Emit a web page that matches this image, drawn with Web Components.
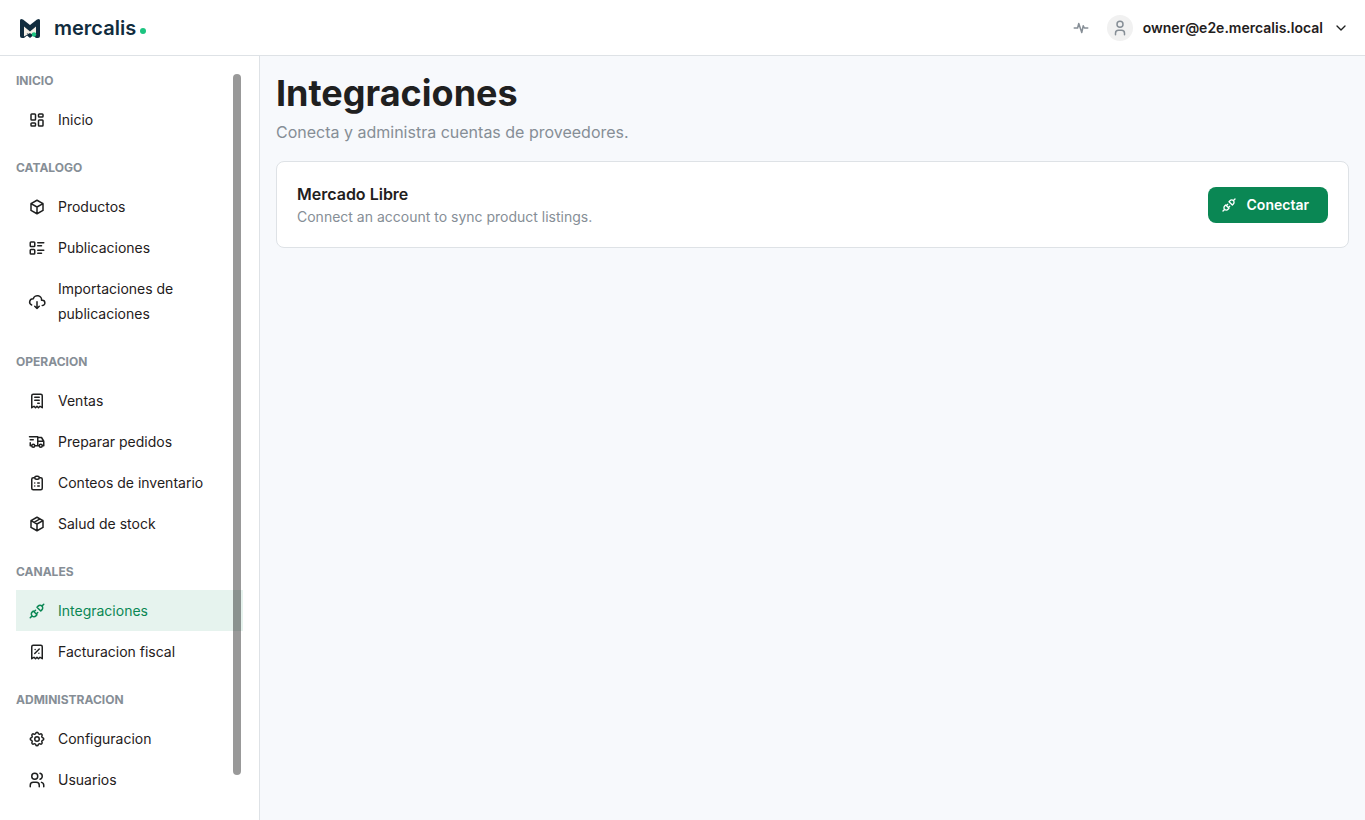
<!DOCTYPE html>
<html lang="es">
<head>
<meta charset="utf-8">
<title>Mercalis - Integraciones</title>
<style>
  :root {
    --color-text: #1f2020;
    --color-dimmed: #868e96;
    --color-border: #dee2e6;
    --color-canvas: #f7f9fc;
    --color-brand: #0a8754;
    --color-brand-soft: #e6f3ee;
    --color-ink: #112c3e;
  }
  body {
    margin: 0;
    font-family: Inter, "Liberation Sans", sans-serif;
    font-size: 14px;
    color: var(--color-text);
  }
</style>
</head>
<body>
<app-shell>
  <app-brand slot="brand"></app-brand>
  <user-menu slot="user" email="owner@e2e.mercalis.local"></user-menu>

  <side-nav slot="nav">
    <nav-group label="Inicio">
      <nav-item icon="dashboard">Inicio</nav-item>
    </nav-group>
    <nav-group label="Catalogo">
      <nav-item icon="box">Productos</nav-item>
      <nav-item icon="list">Publicaciones</nav-item>
      <nav-item icon="cloud">Importaciones de publicaciones</nav-item>
    </nav-group>
    <nav-group label="Operacion">
      <nav-item icon="receipt">Ventas</nav-item>
      <nav-item icon="truck">Preparar pedidos</nav-item>
      <nav-item icon="clipboard">Conteos de inventario</nav-item>
      <nav-item icon="package">Salud de stock</nav-item>
    </nav-group>
    <nav-group label="Canales">
      <nav-item icon="plug" active>Integraciones</nav-item>
      <nav-item icon="tax">Facturacion fiscal</nav-item>
    </nav-group>
    <nav-group label="Administracion">
      <nav-item icon="settings">Configuracion</nav-item>
      <nav-item icon="users">Usuarios</nav-item>
    </nav-group>
  </side-nav>

  <page-heading>
    Integraciones
    <span slot="description">Conecta y administra cuentas de proveedores.</span>
  </page-heading>
  <provider-card>
    <span slot="name">Mercado Libre</span>
    <span slot="description">Connect an account to sync product listings.</span>
    <app-button slot="action" icon="plug">Conectar</app-button>
  </provider-card>
</app-shell>

<script>
const BOX = 'M12 3l8 4.5v9l-8 4.5l-8 -4.5v-9l8 -4.5M12 12l8 -4.5M12 12v9M12 12l-8 -4.5';
const RECEIPT = 'M5 21v-16a2 2 0 0 1 2 -2h10a2 2 0 0 1 2 2v16l-3 -2l-2 2l-2 -2l-2 2l-2 -2l-3 2';

// Stroke icons on a 24x24 grid
const ICONS = {
  dashboard: 'M5 4h4a1 1 0 0 1 1 1v6a1 1 0 0 1 -1 1h-4a1 1 0 0 1 -1 -1v-6a1 1 0 0 1 1 -1M5 16h4a1 1 0 0 1 1 1v2a1 1 0 0 1 -1 1h-4a1 1 0 0 1 -1 -1v-2a1 1 0 0 1 1 -1M15 12h4a1 1 0 0 1 1 1v6a1 1 0 0 1 -1 1h-4a1 1 0 0 1 -1 -1v-6a1 1 0 0 1 1 -1M15 4h4a1 1 0 0 1 1 1v2a1 1 0 0 1 -1 1h-4a1 1 0 0 1 -1 -1v-2a1 1 0 0 1 1 -1',
  box: BOX,
  package: BOX + 'M16 5.25l-8 4.5',
  list: 'M13 5h8M13 9h5M13 15h8M13 19h5M3 5a1 1 0 0 1 1 -1h4a1 1 0 0 1 1 1v4a1 1 0 0 1 -1 1h-4a1 1 0 0 1 -1 -1zM3 15a1 1 0 0 1 1 -1h4a1 1 0 0 1 1 1v4a1 1 0 0 1 -1 1h-4a1 1 0 0 1 -1 -1z',
  cloud: 'M19 18a3.5 3.5 0 0 0 0 -7h-1a5 4.5 0 0 0 -11 -2a4.6 4.4 0 0 0 -2.1 8.4M12 13v9M9 19l3 3l3 -3',
  receipt: RECEIPT + 'M9 7h6M9 11h6M13 15h2',
  tax: RECEIPT + 'M9 14l6 -6M9.5 8.5h.01M14.5 13.5h.01',
  truck: 'M5 17a2 2 0 1 0 4 0a2 2 0 1 0 -4 0M15 17a2 2 0 1 0 4 0a2 2 0 1 0 -4 0M5 17h-2v-4m-1 -8h11v12m-4 0h6m4 0h2v-6h-8m0 -5h5l3 5M3 9h4',
  clipboard: 'M9 5h-2a2 2 0 0 0 -2 2v12a2 2 0 0 0 2 2h10a2 2 0 0 0 2 -2v-12a2 2 0 0 0 -2 -2h-2M9 5a2 2 0 0 1 2 -2h2a2 2 0 0 1 0 4h-2a2 2 0 0 1 -2 -2M9 12h.01M13 12h2M9 16h.01M13 16h2',
  plug: 'M7 12l5 5l-1.5 1.5a3.536 3.536 0 1 1 -5 -5l1.5 -1.5M17 12l-5 -5l1.5 -1.5a3.536 3.536 0 1 1 5 5l-1.5 1.5M3 21l2.5 -2.5M18.5 5.5l2.5 -2.5M10 11l-2 2M13 14l-2 2',
  settings: 'M10.325 4.317c.426 -1.756 2.924 -1.756 3.35 0a1.724 1.724 0 0 0 2.573 1.066c1.543 -.94 3.31 .826 2.37 2.37a1.724 1.724 0 0 0 1.065 2.572c1.756 .426 1.756 2.924 0 3.35a1.724 1.724 0 0 0 -1.066 2.573c.94 1.543 -.826 3.31 -2.37 2.37a1.724 1.724 0 0 0 -2.572 1.065c-.426 1.756 -2.924 1.756 -3.35 0a1.724 1.724 0 0 0 -2.573 -1.066c-1.543 .94 -3.31 -.826 -2.37 -2.37a1.724 1.724 0 0 0 -1.065 -2.572c-1.756 -.426 -1.756 -2.924 0 -3.35a1.724 1.724 0 0 0 1.066 -2.573c-.94 -1.543 .826 -3.31 2.37 -2.37c1 .608 2.296 .07 2.572 -1.065M9 12a3 3 0 1 0 6 0a3 3 0 0 0 -6 0',
  users: 'M5 7a4 4 0 1 0 8 0a4 4 0 1 0 -8 0M3 21v-2a4 4 0 0 1 4 -4h4a4 4 0 0 1 4 4v2M16 3.13a4 4 0 0 1 0 7.75M21 21v-2a4 4 0 0 0 -3 -3.85',
  user: 'M8 7a4 4 0 1 0 8 0a4 4 0 0 0 -8 0M6 21v-2a4 4 0 0 1 4 -4h4a4 4 0 0 1 4 4v2',
  chevron: 'M6 9l6 6l6 -6',
  activity: 'M3 12h4.5l1.5 -6l4 12l2 -9l1.5 3h4.5'
};

const icon = (name, size = 18) => `
  <svg width="${size}" height="${size}" viewBox="0 0 24 24" fill="none" stroke="currentColor"
    stroke-width="2" stroke-linecap="round" stroke-linejoin="round" aria-hidden="true"><path d="${ICONS[name]}"/></svg>`;

/**
 * AppShell Component
 * Header, sidebar and main area
 *
 * Slots: brand, user, nav, default (page content)
 */
class AppShell extends HTMLElement {
  constructor() {
    super();
    this.attachShadow({ mode: 'open' }).innerHTML = `
      <style>
        :host { display: flex; flex-direction: column; min-height: 100vh; }
        header {
          display: flex;
          align-items: center;
          justify-content: space-between;
          box-sizing: border-box;
          height: 56px;
          padding: 0 16px;
          background: #fff;
          border-bottom: 1px solid var(--color-border);
        }
        .body { display: flex; flex: 1; }
        aside {
          flex: none;
          box-sizing: border-box;
          width: 260px;
          padding: 16px;
          background: #fff;
          border-right: 1px solid var(--color-border);
        }
        main { flex: 1; min-width: 0; padding: 16px; background: var(--color-canvas); }
      </style>
      <header><slot name="brand"></slot><slot name="user"></slot></header>
      <div class="body">
        <aside><slot name="nav"></slot></aside>
        <main><slot></slot></main>
      </div>
    `;
  }
}

/** AppBrand Component: logo mark and wordmark */
class AppBrand extends HTMLElement {
  constructor() {
    super();
    this.attachShadow({ mode: 'open' }).innerHTML = `
      <style>
        :host { display: block; }
        a { display: flex; align-items: center; color: var(--color-ink); text-decoration: none; }
        svg { display: block; }
        .name { margin-left: 10px; font-size: 20px; font-weight: 600; line-height: 28px; }
        .dot { width: 6px; height: 6px; margin: 6px 0 0 4px; border-radius: 50%; background: #1cc480; }
      </style>
      <a href="#">
        <svg width="28" height="28" viewBox="0 0 28 28" aria-hidden="true">
          <path d="M7 5.500L14 11L21 5.500Q24 4 24 6.500V22Q24 24 22 24H20L17 21.500L14 24L11 21.500L8 24H6Q4 24 4 22V6.500Q4 4 7 5.500Z" fill="#112c3e"/>
          <path d="M8 12.500L14 17.500L20 12.500V19L17 21.500L14 19L8 22.500Z" fill="#f5efe6"/>
          <path d="M10.500 19L14 22.500L17.500 19L14 20.500Z" fill="#112c3e"/>
          <circle cx="18" cy="20.500" r="2.200" fill="#1cc480"/>
        </svg>
        <span class="name">mercalis</span><span class="dot"></span>
      </a>
    `;
  }
}

/** UserMenu Component: activity shortcut and account button */
class UserMenu extends HTMLElement {
  constructor() {
    super();
    this.attachShadow({ mode: 'open' }).innerHTML = `
      <style>
        :host { display: flex; align-items: center; gap: 8px; }
        button {
          display: flex;
          align-items: center;
          gap: 10px;
          padding: 0;
          border: 0;
          background: none;
          color: inherit;
          font: 600 14px/22px Inter, "Liberation Sans", sans-serif;
          cursor: pointer;
        }
        .activity { justify-content: center; width: 36px; height: 36px; color: var(--color-dimmed); }
        .avatar {
          display: grid;
          place-items: center;
          width: 26px;
          height: 26px;
          border-radius: 50%;
          background: #f1f1f1;
          color: var(--color-dimmed);
        }
      </style>
      <button class="activity" type="button" aria-label="Actividad">${icon('activity')}</button>
      <button type="button">
        <span class="avatar">${icon('user')}</span>
        <span>${this.getAttribute('email')}</span>
        ${icon('chevron', 16)}
      </button>
    `;
  }
}

class SideNav extends HTMLElement {
  constructor() {
    super();
    this.attachShadow({ mode: 'open' }).innerHTML = `
      <style>
        :host { display: block; position: relative; height: 100%; }
        nav { display: flex; flex-direction: column; gap: 19px; }
        .thumb {
          position: absolute;
          inset: 2px 2px 29px auto;
          width: 8px;
          border-radius: 8px;
          background: rgba(0, 0, 0, .4);
        }
      </style>
      <nav><slot></slot></nav>
      <div class="thumb"></div>
    `;
  }
}

class NavGroup extends HTMLElement {
  constructor() {
    super();
    this.attachShadow({ mode: 'open' }).innerHTML = `
      <style>
        :host { display: block; }
        .label {
          margin-bottom: 9px;
          font-size: 12px;
          font-weight: 700;
          line-height: 18px;
          text-transform: uppercase;
          color: var(--color-dimmed);
        }
      </style>
      <div class="label">${this.getAttribute('label')}</div>
      <slot></slot>
    `;
  }
}

class NavItem extends HTMLElement {
  constructor() {
    super();
    this.attachShadow({ mode: 'open' }).innerHTML = `
      <style>
        :host { display: block; }
        a {
          display: flex;
          align-items: center;
          gap: 12px;
          padding: 8px 12px;
          line-height: 25px;
          color: inherit;
          text-decoration: none;
        }
        svg { flex: none; }
        :host([active]) a { background: var(--color-brand-soft); color: var(--color-brand); }
      </style>
      <a href="#">${icon(this.getAttribute('icon'))}<span><slot></slot></span></a>
    `;
  }
}

class PageHeading extends HTMLElement {
  constructor() {
    super();
    this.attachShadow({ mode: 'open' }).innerHTML = `
      <style>
        :host { display: block; margin-bottom: 16px; }
        h1 { margin: 0; font-size: 36px; font-weight: 700; line-height: 42px; }
        p { margin: 6px 0 0; font-size: 16px; line-height: 25px; color: var(--color-dimmed); }
      </style>
      <h1><slot></slot></h1>
      <p><slot name="description"></slot></p>
    `;
  }
}

/**
 * ProviderCard Component
 *
 * Slots: name, description, action
 */
class ProviderCard extends HTMLElement {
  constructor() {
    super();
    this.attachShadow({ mode: 'open' }).innerHTML = `
      <style>
        :host {
          display: flex;
          align-items: center;
          justify-content: space-between;
          gap: 16px;
          padding: 20px;
          background: #fff;
          border: 1px solid var(--color-border);
          border-radius: 8px;
        }
        h2 { margin: 0; font-size: 16px; font-weight: 600; line-height: 24px; }
        p { margin: 0; line-height: 21px; color: var(--color-dimmed); }
      </style>
      <div>
        <h2><slot name="name"></slot></h2>
        <p><slot name="description"></slot></p>
      </div>
      <slot name="action"></slot>
    `;
  }
}

class AppButton extends HTMLElement {
  constructor() {
    super();
    this.attachShadow({ mode: 'open' }).innerHTML = `
      <style>
        :host { display: block; }
        button {
          display: flex;
          align-items: center;
          gap: 10px;
          height: 36px;
          padding: 0 18px 0 12px;
          border: 1px solid transparent;
          border-radius: 8px;
          background: var(--color-brand) border-box;
          color: #fff;
          font: 600 14px/22px Inter, "Liberation Sans", sans-serif;
          cursor: pointer;
        }
      </style>
      <button type="button">${icon(this.getAttribute('icon'), 16)}<span><slot></slot></span></button>
    `;
  }
}

// Register custom elements
customElements.define('app-shell', AppShell);
customElements.define('app-brand', AppBrand);
customElements.define('user-menu', UserMenu);
customElements.define('side-nav', SideNav);
customElements.define('nav-group', NavGroup);
customElements.define('nav-item', NavItem);
customElements.define('page-heading', PageHeading);
customElements.define('provider-card', ProviderCard);
customElements.define('app-button', AppButton);
</script>
</body>
</html>
